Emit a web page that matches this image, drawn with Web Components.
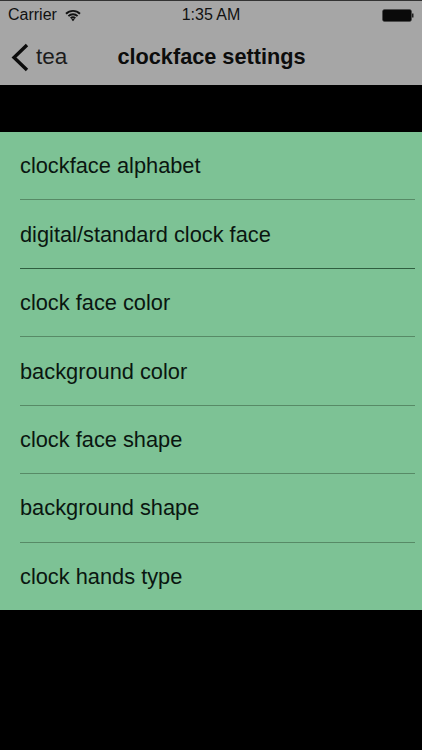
<!DOCTYPE html>
<html>
<head>
<meta charset="utf-8">
<title>clockface settings</title>
<style>
  html, body { margin: 0; height: 100%; background: #000; overflow: hidden; }
  body { font-family: "Liberation Sans", Arial, sans-serif; }
</style>
</head>
<body>
<settings-screen title-text="clockface settings" back="tea">
  <settings-row>clockface alphabet</settings-row>
  <settings-row dark>digital/standard clock face</settings-row>
  <settings-row>clock face color</settings-row>
  <settings-row>background color</settings-row>
  <settings-row>clock face shape</settings-row>
  <settings-row>background shape</settings-row>
  <settings-row last>clock hands type</settings-row>
</settings-screen>

<script>
// status bar at the very top
class StatusBar extends HTMLElement {
    constructor() {
        super();
        this.attachShadow({ mode: 'open' });
        this.shadowRoot.innerHTML = `
        <style>
          :host { display: grid; grid-template-columns: 1fr auto 1fr; align-items: center; height: 28px; padding: 0 8px 0 8px; color: #111; font-size: 16px; }
          .left { display: flex; align-items: center; gap: 8px; }
          .right { display: flex; justify-content: flex-end; }
          svg { display: block; }
        </style>
        <div class="left">
          <span>Carrier</span>
          <svg width="16" height="13" viewBox="0 0 16 12" fill="none" stroke="#111" stroke-width="1.9">
            <path d="M1 4.2a10 10 0 0 1 14 0"/>
            <path d="M3.4 6.6a6.6 6.6 0 0 1 9.2 0"/>
            <path d="M5.7 8.8a3.3 3.3 0 0 1 4.6 0"/>
            <path d="M8 11.8 6.4 10a2.3 2.3 0 0 1 3.2 0z" fill="#111" stroke="none"/>
          </svg>
        </div>
        <span class="time">1:35 AM</span>
        <div class="right">
          <svg width="32" height="13" viewBox="0 0 32 13">
            <rect x="0.5" y="0.5" width="29" height="12" rx="2" fill="#0a0a0a" stroke="#444" stroke-width="0.6"/>
            <rect x="30" y="4.5" width="1.5" height="4" fill="#222"/>
          </svg>
        </div>`;
    }
}

// gray bar with back button and title
class NavBar extends HTMLElement {
    constructor() {
        super();
        this.attachShadow({ mode: 'open' });
        this.shadowRoot.innerHTML = `
        <style>
          :host { display: grid; grid-template-columns: 1fr auto 1fr; align-items: center; height: 56px; padding: 0 10px 0 11px; color: #0c0c0c; }
          .back { display: flex; align-items: center; gap: 7px; font-size: 22.5px; color: #1c1c1c; }
          .title { font-size: 21.7px; font-weight: 700; color: #0c0c0c; }
          svg { display: block; }
        </style>
        <div class="back">
          <svg width="18" height="29" viewBox="0 0 18 29" fill="none" stroke="#0c0c0c" stroke-width="3.4">
            <path d="M16 2 3 14.5 16 27"/>
          </svg>
          <span class="label"></span>
        </div>
        <div class="title"></div>
        <div></div>`;
    }
    connectedCallback() {
        this.shadowRoot.querySelector('.label').innerText = this.getAttribute('back');
        this.shadowRoot.querySelector('.title').innerText = this.getAttribute('title-text');
    }
}

// one line of the green list
class SettingsRow extends HTMLElement {
    constructor() {
        super();
        this.attachShadow({ mode: 'open' });
        this.shadowRoot.innerHTML = `
        <style>
          :host { display: flex; align-items: center; height: 68.45px; box-sizing: border-box; padding-top: 1px; margin: 0 7px 0 20px; color: #0a1610; font-size: 21.8px; border-bottom: 1px solid #578a66; }
          :host([dark]) { border-bottom-color: #2f5f40; }
          :host([last]) { border-bottom: none; }
        </style>
        <slot></slot>`;
    }
}

// whole page: bars, black gap, list
class SettingsScreen extends HTMLElement {
    constructor() {
        super();
        this.attachShadow({ mode: 'open' });
        this.shadowRoot.innerHTML = `
        <style>
          :host { display: block; height: 750px; background: #000; }
          header { background: #a6a6a6; height: 85px; border-top: 1px solid #333; box-sizing: border-box; }
          .list { margin-top: 47px; height: 478px; overflow: hidden; background: #7dc295; }
        </style>
        <header>
          <status-bar></status-bar>
          <nav-bar></nav-bar>
        </header>
        <div class="list"><slot></slot></div>`;
    }
    connectedCallback() {
        const nav = this.shadowRoot.querySelector('nav-bar');
        nav.setAttribute('back', this.getAttribute('back'));
        nav.setAttribute('title-text', this.getAttribute('title-text'));
    }
}

window.customElements.define('status-bar', StatusBar);
window.customElements.define('settings-row', SettingsRow);
window.customElements.define('settings-screen', SettingsScreen);
window.customElements.define('nav-bar', NavBar);
</script>
</body>
</html>
